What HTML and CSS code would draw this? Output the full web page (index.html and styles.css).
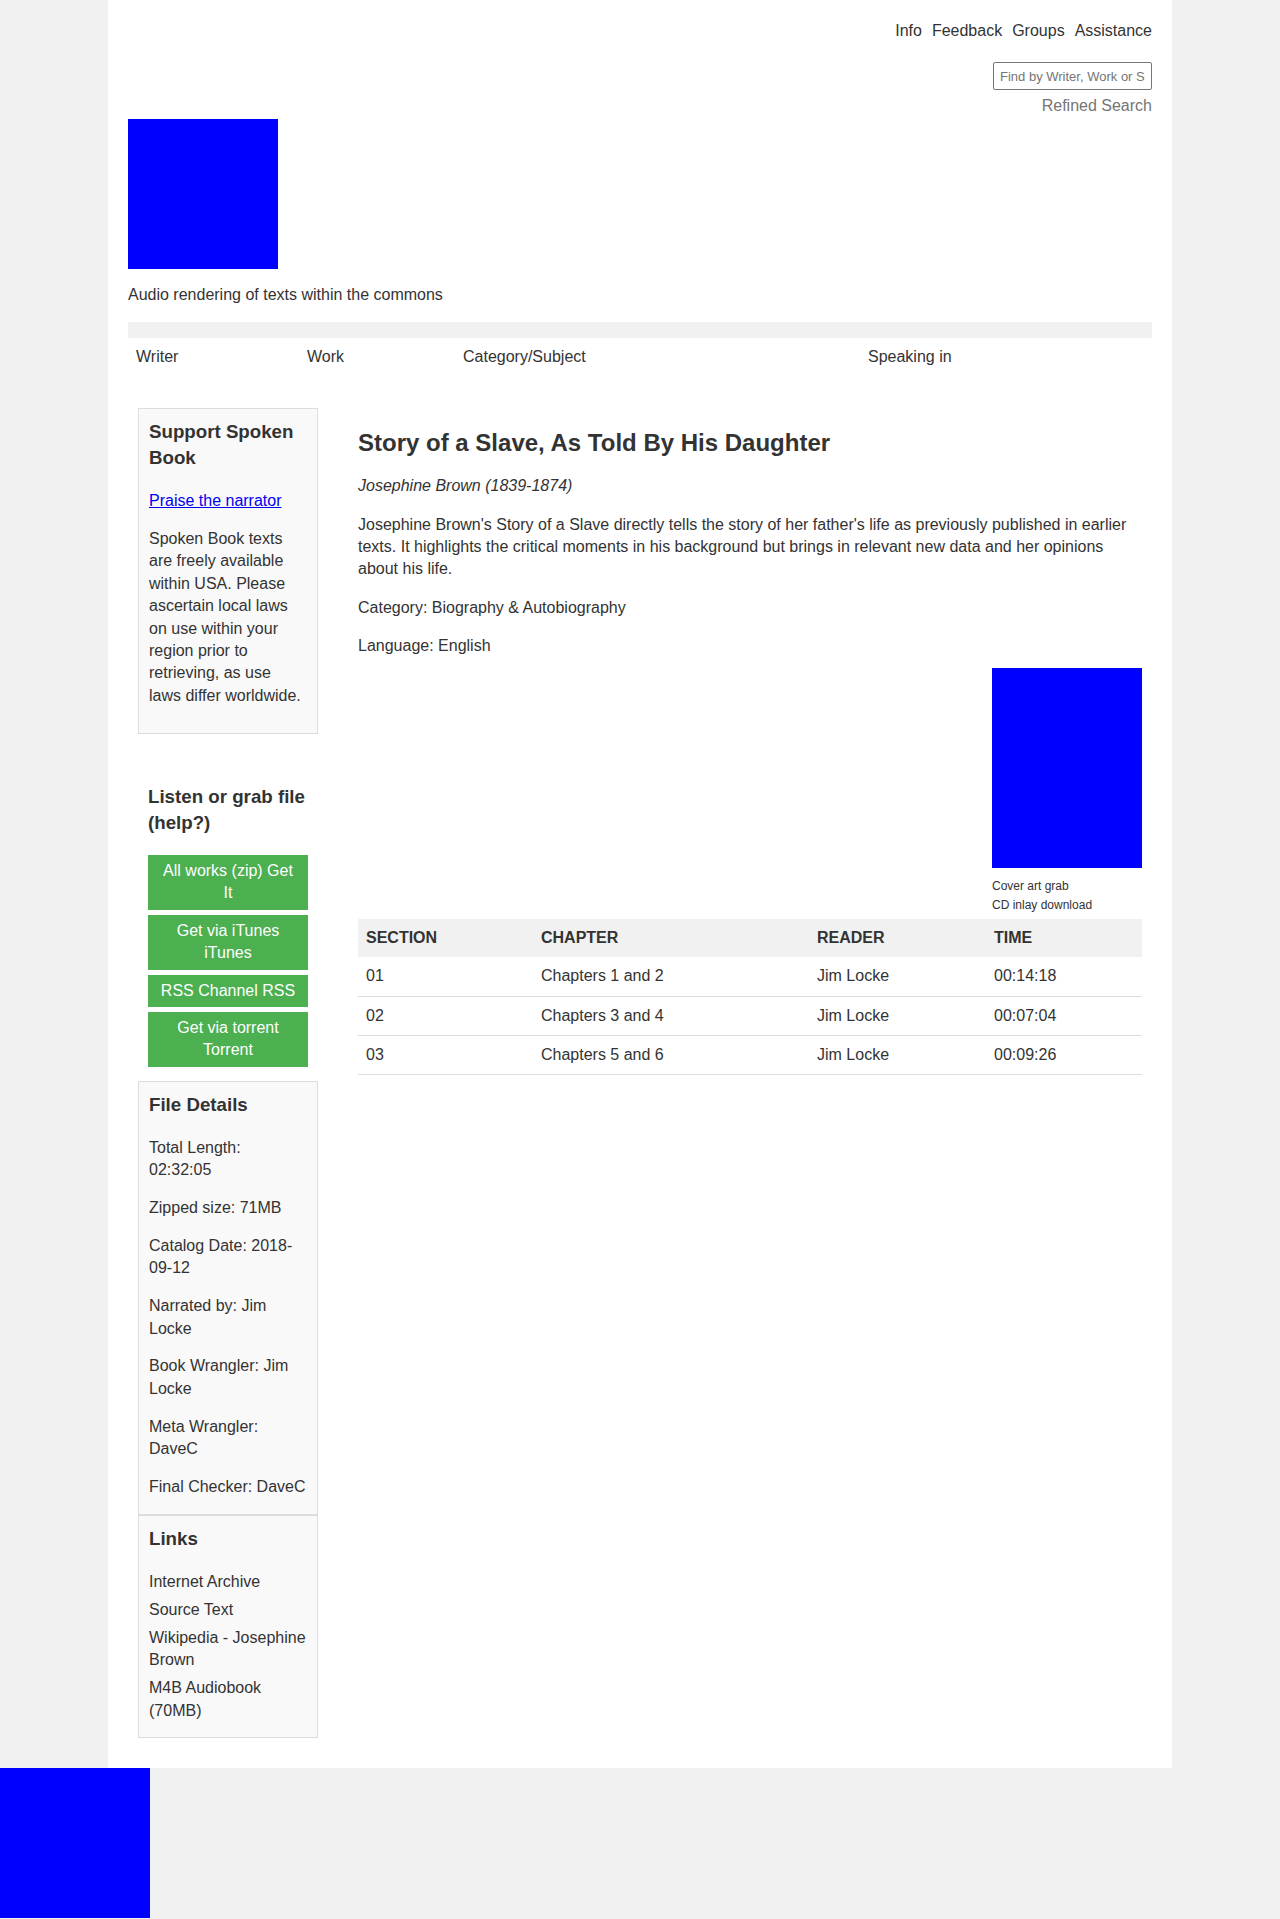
FILE: index.html
```html
<!DOCTYPE html>
<html lang="en">
<head>
<meta charset="utf-8">
<title>Story of a Slave, As Told By His Daughter</title>
<link rel="stylesheet" href="styles.css">
</head>
<body>
<div class="page">
  <header class="masthead">
    <nav class="topnav">
      <a href="#">Info</a>
      <a href="#">Feedback</a>
      <a href="#">Groups</a>
      <a href="#">Assistance</a>
    </nav>
    <form class="search">
      <input type="text" placeholder="Find by Writer, Work or Subject">
    </form>
    <a class="refined" href="#">Refined Search</a>
    <div class="logo"></div>
    <p class="tagline">Audio rendering of texts within the commons</p>
  </header>

  <div class="browse">
    <div class="browse-bar"></div>
    <div class="browse-row">
      <a href="#">Writer</a>
      <a href="#">Work</a>
      <a href="#">Category/Subject</a>
      <a href="#">Speaking in</a>
    </div>
  </div>

  <div class="content">
    <aside class="sidebar">
      <div class="box support">
        <h3>Support Spoken Book</h3>
        <p><a class="praise" href="#">Praise the narrator</a></p>
        <p>Spoken Book texts are freely available within USA. Please ascertain local laws on use within your region prior to retrieving, as use laws differ worldwide.</p>
      </div>

      <div class="listen">
        <h3>Listen or grab file (help?)</h3>
        <a class="btn" href="#">All works (zip) Get It</a>
        <a class="btn" href="#">Get via iTunes iTunes</a>
        <a class="btn" href="#">RSS Channel RSS</a>
        <a class="btn" href="#">Get via torrent Torrent</a>
      </div>

      <div class="box details">
        <h3>File Details</h3>
        <p>Total Length: 02:32:05</p>
        <p>Zipped size: 71MB</p>
        <p>Catalog Date: 2018-09-12</p>
        <p>Narrated by: Jim Locke</p>
        <p>Book Wrangler: Jim Locke</p>
        <p>Meta Wrangler: DaveC</p>
        <p>Final Checker: DaveC</p>
      </div>

      <div class="box links">
        <h3>Links</h3>
        <ul>
          <li><a href="#">Internet Archive</a></li>
          <li><a href="#">Source Text</a></li>
          <li><a href="#">Wikipedia - Josephine Brown</a></li>
          <li><a href="#">M4B Audiobook (70MB)</a></li>
        </ul>
      </div>
    </aside>

    <main class="main">
      <h2 class="title">Story of a Slave, As Told By His Daughter</h2>
      <p class="author">Josephine Brown (1839-1874)</p>
      <p>Josephine Brown's Story of a Slave directly tells the story of her father's life as previously published in earlier texts. It highlights the critical moments in his background but brings in relevant new data and her opinions about his life.</p>
      <p>Category: Biography &amp; Autobiography</p>
      <p class="lang">Language: English</p>

      <div class="cover">
        <div class="cover-art"></div>
        <div class="cover-links">
          <a href="#">Cover art grab</a>
          <a href="#">CD inlay download</a>
        </div>
      </div>

      <table class="chapters">
        <colgroup>
          <col class="c1"><col class="c2"><col class="c3"><col class="c4">
        </colgroup>
        <thead>
          <tr><th>SECTION</th><th>CHAPTER</th><th>READER</th><th>TIME</th></tr>
        </thead>
        <tbody>
          <tr><td>01</td><td>Chapters 1 and 2</td><td>Jim Locke</td><td>00:14:18</td></tr>
          <tr><td>02</td><td>Chapters 3 and 4</td><td>Jim Locke</td><td>00:07:04</td></tr>
          <tr><td>03</td><td>Chapters 5 and 6</td><td>Jim Locke</td><td>00:09:26</td></tr>
        </tbody>
      </table>
    </main>
  </div>
</div>
<footer class="footer">
  <div class="footer-logo"></div>
</footer>
</body>
</html>
```

FILE: styles.css
```css
html, body {
  margin: 0;
  padding: 0;
}

body {
  background: #f1f1f1;
  font-family: "Liberation Sans", Arial, sans-serif;
  font-size: 16px;
  line-height: 1.4;
  color: #333;
}

a {
  color: #333;
  text-decoration: none;
}

.page {
  box-sizing: border-box;
  width: 1064px;
  margin: 0 auto;
  padding: 20px 20px 30px;
  background: #fff;
}

/* header */
.topnav {
  display: flex;
  justify-content: flex-end;
  gap: 10px;
}

.search {
  display: flex;
  justify-content: flex-end;
  margin: 20px 0 0;
}

.search input {
  box-sizing: border-box;
  width: 159px;
  height: 28px;
  padding: 0 6px;
  border: 1px solid #767676;
  border-radius: 2px;
  font-family: "Liberation Sans", Arial, sans-serif;
  font-size: 13px;
  color: #333;
}

.search input::placeholder {
  color: #757575;
}

.refined {
  display: block;
  text-align: right;
  margin-top: 5px;
  color: #757575;
}

.logo {
  width: 150px;
  height: 150px;
  margin-top: 1px;
  background: #0000ff;
}

.tagline {
  margin: 15px 0 16px;
}

/* browse */
.browse-bar {
  height: 16px;
  background: #f1f1f1;
}

.browse-row {
  display: grid;
  grid-template-columns: 171px 156px 405px 1fr;
}

.browse-row a {
  padding: 8px;
}

/* content */
.content {
  display: grid;
  grid-template-columns: 200px 1fr;
  margin-top: 31px;
}

.sidebar {
  padding: 0 10px;
}

.box {
  background: #f9f9f9;
  border: 1px solid #ddd;
  padding: 10px;
}

.sidebar h3 {
  font-size: 18.72px;
  line-height: 1.4;
  margin: 0 0 18.72px;
}

.sidebar p {
  margin: 16px 0;
}

.praise {
  color: #0000ee;
  text-decoration: underline;
}

.listen {
  padding: 10px 10px 9px;
  margin-top: 21px;
}

.listen h3 {
  margin-top: 18.72px;
}

.btn {
  display: block;
  background: #4caf50;
  color: #fff;
  text-align: center;
  padding: 5px 10px;
  margin-bottom: 5px;
}

.details {
  padding-bottom: 0;
}

.details p {
  margin: 15.5px 0;
}

.links ul {
  list-style: none;
  margin: 0 0 5px;
  padding: 0;
}

.links li + li {
  margin-top: 5.6px;
}

/* main */
.main {
  padding: 0 10px 0 30px;
}

.title {
  font-size: 24px;
  line-height: 1.4;
  margin: 18px 0 16px;
}

.main p {
  margin: 16px 0;
}

.author {
  font-style: italic;
}

.main .lang {
  margin-bottom: 10px;
}

.cover {
  width: 150px;
  margin: 0 0 4px auto;
}

.cover-art {
  height: 200px;
  background: #0000ff;
}

.cover-links {
  margin-top: 9px;
  font-size: 12px;
  line-height: 1.6;
}

.cover-links a {
  display: block;
}

.chapters {
  width: 100%;
  border-collapse: collapse;
  table-layout: fixed;
}

.chapters .c1 { width: 175px; }
.chapters .c2 { width: 276px; }
.chapters .c3 { width: 177px; }

.chapters th,
.chapters td {
  padding: 8px;
  text-align: left;
}

.chapters th {
  background: #f1f1f1;
  font-weight: bold;
}

.chapters td {
  border-bottom: 1px solid #ddd;
}

/* footer */
.footer-logo {
  width: 150px;
  height: 150px;
  background: #0000ff;
}
```
